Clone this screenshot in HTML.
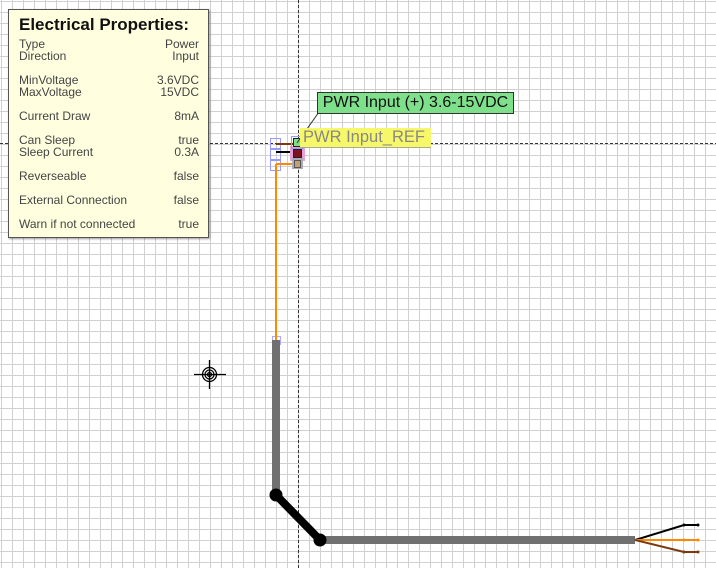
<!DOCTYPE html>
<html><head><meta charset="utf-8">
<style>
html,body{margin:0;padding:0;}
body{width:716px;height:568px;overflow:hidden;position:relative;font-family:"Liberation Sans",Arial,sans-serif;
background-color:#fff;
background-image:linear-gradient(to right,#d0d0d0 1px,transparent 1px),linear-gradient(to bottom,#d0d0d0 1px,transparent 1px);
background-size:11px 11px;background-position:1px 1px;}
.box{position:absolute;left:8px;top:9px;width:199px;height:227px;background:#ffffe0;border:1px solid #555;box-shadow:1px 1px 2px rgba(0,0,0,.4);}
.t{position:absolute;left:10px;top:5px;font-size:17px;font-weight:bold;color:#111;}
.r{position:absolute;left:10px;right:9px;font-size:12px;line-height:12px;color:#444;}
.r span{float:right;}
.g{position:absolute;left:317px;top:92px;width:197px;height:22px;background:#7ee08a;border:1px solid #333;font-size:16px;line-height:20px;text-align:center;color:#111;box-sizing:border-box;}
.y{position:absolute;left:300px;top:128px;width:131px;height:20px;background:#f7f76a;border-bottom:1px solid #aa9;font-size:16.5px;line-height:19px;color:#888;padding-left:3px;box-sizing:border-box;}
</style></head><body>
<svg width="716" height="568" style="position:absolute;left:0;top:0">
<line x1="298.5" y1="0" x2="298.5" y2="568" stroke="#333" stroke-width="1" stroke-dasharray="3,2"/>
<line x1="0" y1="143.5" x2="716" y2="143.5" stroke="#333" stroke-width="1" stroke-dasharray="3,2"/>
</svg>
<div class="box">
<div class="t">Electrical Properties:</div>
<div class="r" style="top:28px">Type<span>Power</span></div>
<div class="r" style="top:40px">Direction<span>Input</span></div>
<div class="r" style="top:64px">MinVoltage<span>3.6VDC</span></div>
<div class="r" style="top:76px">MaxVoltage<span>15VDC</span></div>
<div class="r" style="top:100px">Current Draw<span>8mA</span></div>
<div class="r" style="top:124px">Can Sleep<span>true</span></div>
<div class="r" style="top:136px">Sleep Current<span>0.3A</span></div>
<div class="r" style="top:160px">Reverseable<span>false</span></div>
<div class="r" style="top:184px">External Connection<span>false</span></div>
<div class="r" style="top:208px">Warn if not connected<span>true</span></div>
</div>
<svg width="716" height="568" style="position:absolute;left:0;top:0">
<rect x="270.5" y="138.5" width="10" height="10" fill="none" stroke="#99f"/>
<rect x="270.5" y="149.5" width="10" height="10" fill="none" stroke="#99f"/>
<rect x="270.5" y="160.5" width="10" height="10" fill="none" stroke="#99f"/>
<rect x="272.5" y="336.5" width="8" height="8" fill="none" stroke="#aaf"/>
<line x1="276" y1="144" x2="295" y2="144" stroke="#7a3a10" stroke-width="2"/>
<line x1="276" y1="152" x2="295" y2="152" stroke="#000" stroke-width="2"/>
<line x1="276" y1="164" x2="296" y2="164" stroke="#f80" stroke-width="2"/>
<line x1="276" y1="164" x2="276" y2="340" stroke="#f80" stroke-width="2"/>
<rect x="290" y="146" width="15" height="15" fill="#e8a0d8"/>
<rect x="291.5" y="136.5" width="12" height="12" fill="none" stroke="#99f"/>
<rect x="293.5" y="138.5" width="8" height="8" fill="#7ee08a" stroke="#222"/>
<rect x="293.5" y="149.5" width="8" height="8" fill="#7a1020" stroke="#222"/>
<rect x="292" y="158" width="11" height="11" fill="#aab"/>
<rect x="294.5" y="160.5" width="6" height="7" fill="#c8a070" stroke="#555"/>
<line x1="297" y1="143" x2="319" y2="112" stroke="#333" stroke-width="1"/>
<polyline points="276,340 276,495" fill="none" stroke="#707070" stroke-width="8"/>
<line x1="320" y1="540" x2="635" y2="540" stroke="#707070" stroke-width="8"/>
<line x1="276" y1="495" x2="320" y2="540" stroke="#000" stroke-width="8"/>
<circle cx="276" cy="495" r="6.5" fill="#000"/>
<circle cx="320" cy="540" r="6.5" fill="#000"/>
<polyline points="635,540 684,525 698,525" fill="none" stroke="#000" stroke-width="2"/>
<polyline points="635,540 698,540" fill="none" stroke="#f80" stroke-width="2"/>
<polyline points="635,540 684,552 698,552" fill="none" stroke="#7a3a10" stroke-width="2"/>
<circle cx="684" cy="525" r="1.5" fill="#000"/><circle cx="698" cy="525" r="1.5" fill="#000"/>
<circle cx="684" cy="540" r="1.5" fill="#f80"/><circle cx="698" cy="540" r="1.5" fill="#f80"/>
<circle cx="684" cy="552" r="1.5" fill="#7a3a10"/><circle cx="698" cy="552" r="1.5" fill="#7a3a10"/>
<g stroke="#000" fill="none" stroke-width="1.3">
<line x1="194" y1="374.5" x2="226" y2="374.5"/>
<line x1="209.5" y1="360" x2="209.5" y2="389"/>
<circle cx="209.5" cy="374.5" r="7"/>
<circle cx="209.5" cy="374.5" r="4.5"/>
<circle cx="209.5" cy="374.5" r="2"/>
</g>
</svg>
<div class="y">PWR Input_REF</div>
<div class="g">PWR Input (+) 3.6-15VDC</div>
</body></html>
